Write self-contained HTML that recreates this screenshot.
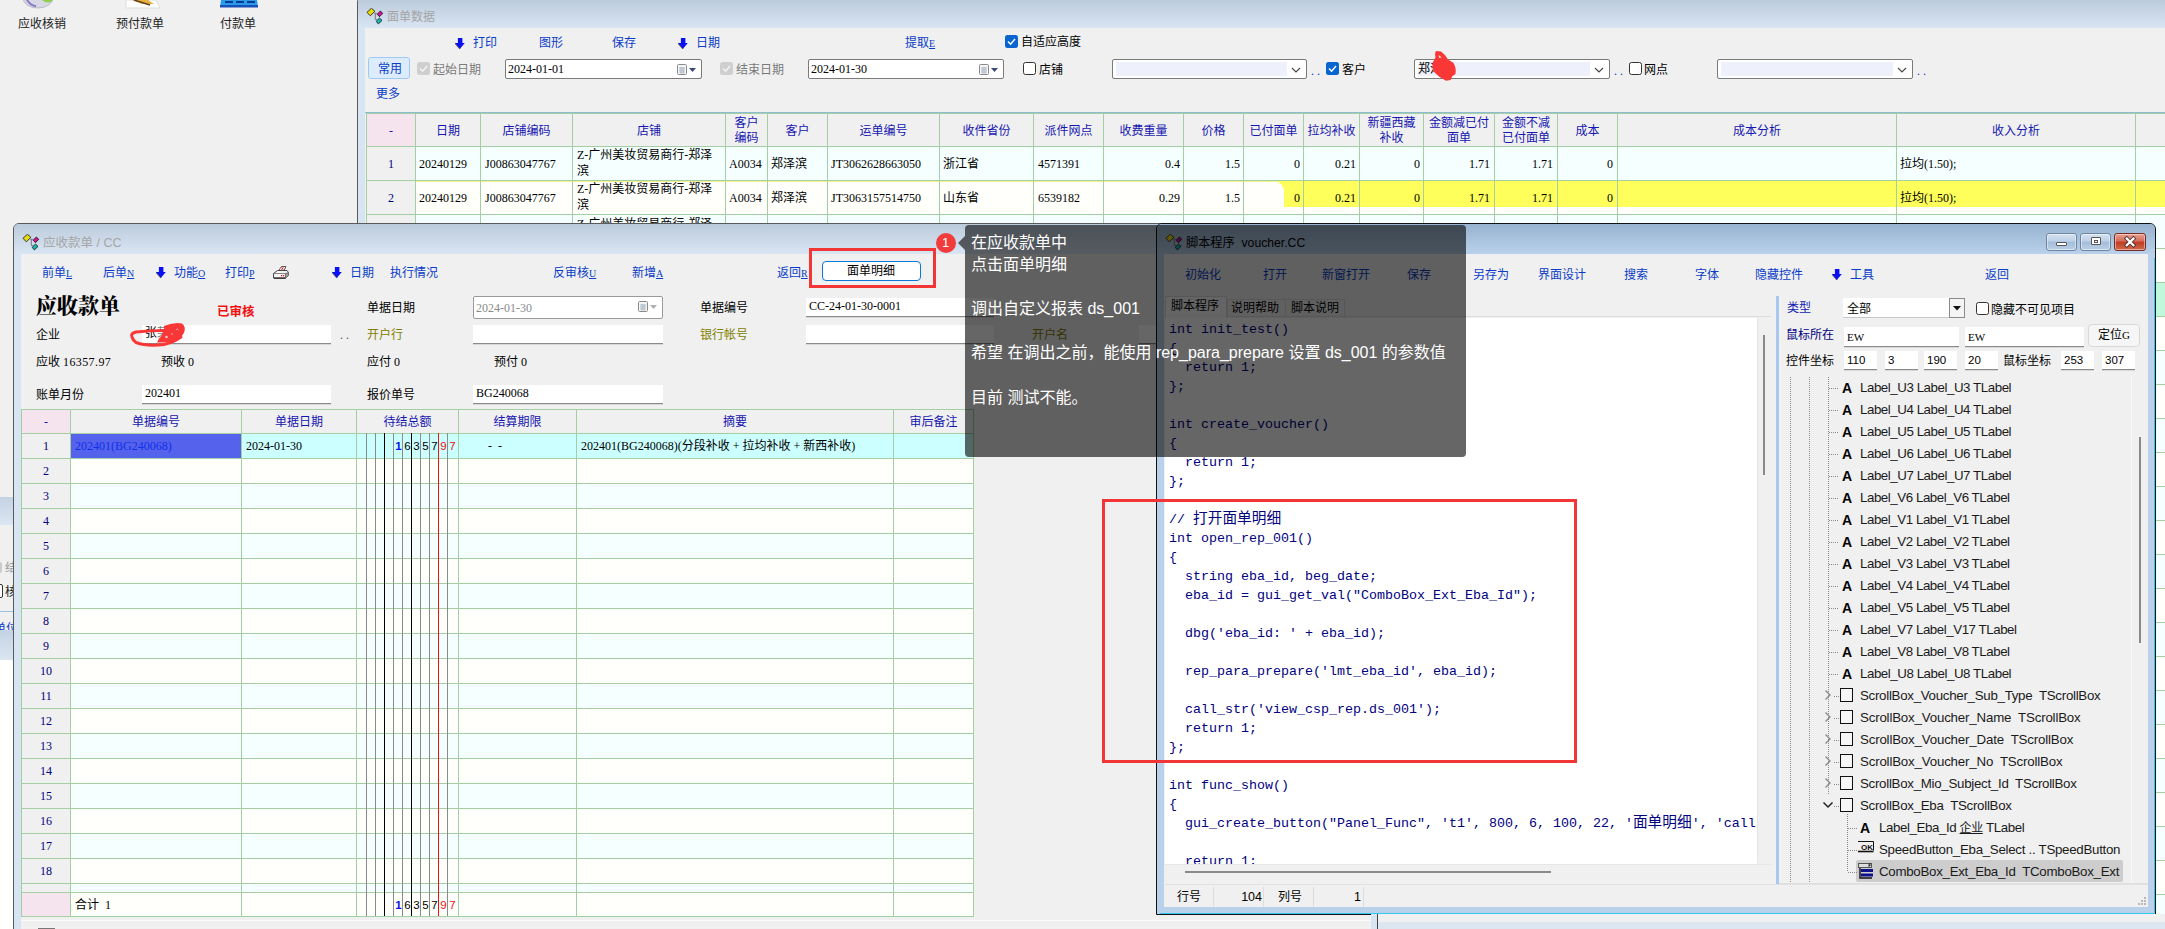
<!DOCTYPE html><html lang="zh"><head><meta charset="utf-8"><title>应收款单</title><style>

html,body{margin:0;padding:0}
body{width:2165px;height:929px;overflow:hidden;position:relative;background:#f0f0f0;font-family:'Liberation Serif','Noto Sans CJK SC',sans-serif;font-size:12px;}
div{box-sizing:border-box}
.abs{position:absolute}
.inp{position:absolute;background:#fff;border-bottom:1px solid #8a8a8a;box-shadow:0 1px 0 #d8d8d8;padding-left:3px;white-space:nowrap;overflow:hidden;font-size:12px}
.date{position:absolute;background:#fff;border:1px solid #7a7a7a;border-radius:2px;padding-left:2px;white-space:nowrap;font-size:12px}
.cb{position:absolute;width:13px;height:13px;border:1px solid #333;border-radius:2.5px;background:#fff}
.cbc{position:absolute;width:13px;height:13px;border-radius:2.5px;background:#0a64d0}
.cbd{position:absolute;width:13px;height:13px;border-radius:2.5px;background:#cfcfcf}
.combo{position:absolute;background:#fff;border:1px solid #7a7a7a;border-radius:2px}
.combo i{position:absolute;left:3px;top:2px;bottom:2px;right:19px;background:#eef0fb}
.vl{position:absolute;width:1px;background:#a3cfa3}
.hl{position:absolute;height:1px;background:#a3cfa3}
.tree{font-family:'Liberation Sans','Noto Sans CJK SC',sans-serif;font-size:13.3px;color:#1a1a1a;letter-spacing:-0.28px}
.code{font-family:'Liberation Mono','Noto Sans CJK SC',monospace;font-size:13.34px;color:#000080;white-space:pre;position:absolute;line-height:19px}
.code b{font-weight:normal;font-size:14.7px;line-height:1}
.k{font-size:10px}
.ov{font-family:'Liberation Sans','Noto Sans CJK SC',sans-serif;font-size:16px;color:#fff}

</style></head><body>
<div style="position:absolute;left:18px;top:16px;line-height:16px;font-size:12px;color:#222;white-space:nowrap;">应收核销</div>
<div style="position:absolute;left:116px;top:16px;line-height:16px;font-size:12px;color:#222;white-space:nowrap;">预付款单</div>
<div style="position:absolute;left:220px;top:16px;line-height:16px;font-size:12px;color:#222;white-space:nowrap;">付款单</div>
<svg class="abs" style="left:20px;top:0" width="40" height="12"><ellipse cx="18" cy="-2" rx="15" ry="10" fill="#d8d8e4" stroke="#b8b8c8"/><path d="M22 0q8 6 12-2v-2h-12z" fill="#8ed04a"/><path d="M6 -2q4 8 10 8" stroke="#8878c8" fill="none" stroke-width="2"/></svg>
<svg class="abs" style="left:124px;top:0" width="40" height="12"><path d="M2 0h30l4 8h-34z" fill="#fff" stroke="#ddd"/><path d="M8 0h16l6 4h-12z" fill="#e8b040"/><path d="M10 0l16 5" stroke="#604020" stroke-width="1.5"/></svg>
<svg class="abs" style="left:219px;top:0" width="42" height="12"><path d="M2 0h36l1 7h-38z" fill="#2a9be8"/><path d="M1 5h38v2.5h-38z" fill="#1850b8"/><path d="M6 2h8M17 2h8M28 2h8" stroke="#0b3a90" stroke-width="2"/></svg>
<div style="position:absolute;left:0px;top:497px;width:14px;height:28px;background:linear-gradient(#c3d2e4,#dce6f2)"></div>
<div style="position:absolute;left:-4px;top:560px;line-height:16px;font-size:12px;color:#999;white-space:nowrap;"><span style="display:inline-block;width:6px;height:11px;border-radius:2px;background:#ccc;vertical-align:-1px;margin-right:3px"></span>结</div>
<div style="position:absolute;left:-7px;top:584px;line-height:16px;font-size:12px;color:#222;white-space:nowrap;"><span style="display:inline-block;width:8px;height:12px;border:1px solid #333;border-radius:2px;background:#fff;vertical-align:-2px;margin-right:2px"></span>核</div>
<div style="position:absolute;left:0px;top:611px;width:14px;height:1px;background:#9cc0e0"></div>
<div style="position:absolute;left:-6px;top:621px;line-height:16px;font-size:12px;color:#0a3cc8;white-space:nowrap;text-decoration:underline;">单位</div>
<div style="position:absolute;left:0px;top:630px;width:14px;height:30px;background:linear-gradient(#c3d2e4,#dce6f2)"></div>
<div style="position:absolute;left:0px;top:660px;width:14px;height:269px;background:#fff"></div>
<div class="abs" style="left:357px;top:-4px;width:1830px;height:940px;border:1px solid #5a5a5a;border-radius:6px 6px 0 0;background:#d7e4f2"></div>
<div style="position:absolute;left:358px;top:0px;width:1810px;height:28px;background:linear-gradient(#bccbdc,#d9e5f3)"></div>
<div style="position:absolute;left:365px;top:28px;width:1800px;height:901px;background:#f0f0f0"></div>
<svg width="18" height="17" viewBox="0 0 18 17" style="position:absolute;left:366px;top:8px"><path d="M8.3 5.3h2.6M9.3 5.3v6.3h2" fill="none" stroke="#777" stroke-width="1"/><path d="M1 4.3L5.4 0.2 8.9 3.3 4.3 7.8z" fill="#e6dc10" stroke="#111" stroke-width=".8"/><path d="M11.2 6.2L14.3 3 16.8 5.3 13.5 8.7z" fill="#d8109c" stroke="#111" stroke-width=".8"/><path d="M10.2 13.4L13.5 10.1 16 12.4 12.4 15.9z" fill="#10bcb4" stroke="#111" stroke-width=".8"/></svg>
<div style="position:absolute;left:387px;top:9px;line-height:16px;font-size:12px;color:#a4a4a4;white-space:nowrap;font-family:'Liberation Sans','Noto Sans CJK SC',sans-serif;">面单数据</div>
<svg width="11" height="13" viewBox="0 0 11 13" style="position:absolute;left:455px;top:36.5px"><path d="M0.2 6.2L5 11.9" fill="none" stroke="#555" stroke-width="1.3"/><path d="M2.9 1h4.5v5h2.4L5 11.7 0.2 6h2.7z" fill="#0a10f4"/></svg>
<div style="position:absolute;left:473px;top:35px;line-height:16px;font-size:12px;color:#0a3cc8;white-space:nowrap;">打印</div>
<div style="position:absolute;left:539px;top:35px;line-height:16px;font-size:12px;color:#0a3cc8;white-space:nowrap;">图形</div>
<div style="position:absolute;left:612px;top:35px;line-height:16px;font-size:12px;color:#0a3cc8;white-space:nowrap;">保存</div>
<svg width="11" height="13" viewBox="0 0 11 13" style="position:absolute;left:677.5px;top:36.5px"><path d="M0.2 6.2L5 11.9" fill="none" stroke="#555" stroke-width="1.3"/><path d="M2.9 1h4.5v5h2.4L5 11.7 0.2 6h2.7z" fill="#0a10f4"/></svg>
<div style="position:absolute;left:696px;top:35px;line-height:16px;font-size:12px;color:#0a3cc8;white-space:nowrap;">日期</div>
<div style="position:absolute;left:905px;top:35px;line-height:16px;font-size:12px;color:#0a3cc8;white-space:nowrap;">提取<u class="k">E</u></div>
<div class="cbc" style="left:1005px;top:35px"><svg width="13" height="13"><path d="M3 6.5l2.6 2.7L10 4" stroke="#fff" stroke-width="1.4" fill="none"/></svg></div>
<div style="position:absolute;left:1021px;top:34px;line-height:16px;font-size:12px;color:#000;white-space:nowrap;">自适应高度</div>
<div style="position:absolute;left:368px;top:57px;width:42px;height:22px;background:#dcecfc;border:1px solid #9ccaf4;border-radius:3px"></div>
<div style="position:absolute;left:378px;top:61px;line-height:16px;font-size:12px;color:#0a3cc8;white-space:nowrap;">常用</div>
<div class="cbd" style="left:417px;top:62px"><svg width="13" height="13"><path d="M3 6.5l2.6 2.7L10 4" stroke="#f4f4f4" stroke-width="1.4" fill="none"/></svg></div>
<div style="position:absolute;left:433px;top:62px;line-height:16px;font-size:12px;color:#7a7a7a;white-space:nowrap;">起始日期</div>
<div class="date" style="left:505px;top:59px;width:197px;height:20px;line-height:18px">2024-01-01<svg width="19" height="12" style="position:absolute;right:5px;top:4px"><rect x=".5" y=".5" width="9" height="10" rx="1" fill="#f4f4f4" stroke="#8a8a8a"/><path d="M2 4h6M2 6h6M2 8h6M4 3v7M6 3v7" stroke="#9ab" stroke-width=".7"/><path d="M12 4h7l-3.5 4z" fill="#3a4a78"/></svg></div>
<div class="cbd" style="left:720px;top:62px"><svg width="13" height="13"><path d="M3 6.5l2.6 2.7L10 4" stroke="#f4f4f4" stroke-width="1.4" fill="none"/></svg></div>
<div style="position:absolute;left:736px;top:62px;line-height:16px;font-size:12px;color:#7a7a7a;white-space:nowrap;">结束日期</div>
<div class="date" style="left:808px;top:59px;width:196px;height:20px;line-height:18px">2024-01-30<svg width="19" height="12" style="position:absolute;right:5px;top:4px"><rect x=".5" y=".5" width="9" height="10" rx="1" fill="#f4f4f4" stroke="#8a8a8a"/><path d="M2 4h6M2 6h6M2 8h6M4 3v7M6 3v7" stroke="#9ab" stroke-width=".7"/><path d="M12 4h7l-3.5 4z" fill="#3a4a78"/></svg></div>
<div class="cb" style="left:1023px;top:62px"></div>
<div style="position:absolute;left:1039px;top:62px;line-height:16px;font-size:12px;color:#000;white-space:nowrap;">店铺</div>
<div class="combo" style="left:1112px;top:59px;width:195px;height:20px"><i></i><svg width="10" height="6" style="position:absolute;right:5px;top:7px"><path d="M1 1l4 4 4-4" stroke="#444" fill="none" stroke-width="1.1"/></svg></div>
<div style="position:absolute;left:1311px;top:62.5px;line-height:16px;font-size:12px;color:#0a3cc8;white-space:nowrap;">. .</div>
<div class="cbc" style="left:1326px;top:62px"><svg width="13" height="13"><path d="M3 6.5l2.6 2.7L10 4" stroke="#fff" stroke-width="1.4" fill="none"/></svg></div>
<div style="position:absolute;left:1342px;top:62px;line-height:16px;font-size:12px;color:#000;white-space:nowrap;">客户</div>
<div class="combo" style="left:1414px;top:59px;width:196px;height:20px"><i></i><svg width="10" height="6" style="position:absolute;right:5px;top:7px"><path d="M1 1l4 4 4-4" stroke="#444" fill="none" stroke-width="1.1"/></svg><span style="position:absolute;left:3px;top:1px;line-height:16px">郑泽滨</span></div>
<div style="position:absolute;left:1614px;top:62.5px;line-height:16px;font-size:12px;color:#0a3cc8;white-space:nowrap;">. .</div>
<div class="cb" style="left:1629px;top:62px"></div>
<div style="position:absolute;left:1644px;top:62px;line-height:16px;font-size:12px;color:#000;white-space:nowrap;">网点</div>
<div class="combo" style="left:1717px;top:59px;width:196px;height:20px"><i></i><svg width="10" height="6" style="position:absolute;right:5px;top:7px"><path d="M1 1l4 4 4-4" stroke="#444" fill="none" stroke-width="1.1"/></svg></div>
<div style="position:absolute;left:1917px;top:62.5px;line-height:16px;font-size:12px;color:#0a3cc8;white-space:nowrap;">. .</div>
<div style="position:absolute;left:376px;top:86px;line-height:16px;font-size:12px;color:#0a3cc8;white-space:nowrap;">更多</div>
<div style="position:absolute;left:365px;top:112px;width:1800px;height:1px;background:#8fbbd0"></div>
<div style="position:absolute;left:367px;top:113px;width:1800px;height:33px;background:#f0f0f0"></div>
<div style="position:absolute;left:367px;top:113px;width:48px;height:33px;background:#f5e3ee"></div>
<div style="position:absolute;left:415px;top:146px;width:1760px;height:34px;background:#f5ffff"></div>
<div style="position:absolute;left:367px;top:146px;width:48px;height:34px;background:#f0f0f0"></div>
<div style="position:absolute;left:415px;top:180px;width:1760px;height:34px;background:#fffffc"></div>
<div style="position:absolute;left:367px;top:180px;width:48px;height:34px;background:#f0f0f0"></div>
<div style="position:absolute;left:415px;top:214px;width:1760px;height:34px;background:#f5ffff"></div>
<div style="position:absolute;left:367px;top:214px;width:48px;height:34px;background:#f0f0f0"></div>
<div style="position:absolute;left:415px;top:248px;width:1760px;height:34px;background:#fffffc"></div>
<div style="position:absolute;left:367px;top:248px;width:48px;height:34px;background:#f0f0f0"></div>
<div style="position:absolute;left:415px;top:282px;width:1760px;height:34px;background:#bff8da"></div>
<div style="position:absolute;left:367px;top:282px;width:48px;height:34px;background:#f0f0f0"></div>
<div style="position:absolute;left:415px;top:316px;width:1760px;height:34px;background:#fffffc"></div>
<div style="position:absolute;left:367px;top:316px;width:48px;height:34px;background:#f0f0f0"></div>
<div style="position:absolute;left:415px;top:350px;width:1760px;height:34px;background:#f5ffff"></div>
<div style="position:absolute;left:367px;top:350px;width:48px;height:34px;background:#f0f0f0"></div>
<div style="position:absolute;left:415px;top:384px;width:1760px;height:34px;background:#fffffc"></div>
<div style="position:absolute;left:367px;top:384px;width:48px;height:34px;background:#f0f0f0"></div>
<div style="position:absolute;left:415px;top:418px;width:1760px;height:34px;background:#f5ffff"></div>
<div style="position:absolute;left:367px;top:418px;width:48px;height:34px;background:#f0f0f0"></div>
<div style="position:absolute;left:415px;top:452px;width:1760px;height:34px;background:#fffffc"></div>
<div style="position:absolute;left:367px;top:452px;width:48px;height:34px;background:#f0f0f0"></div>
<div style="position:absolute;left:415px;top:486px;width:1760px;height:34px;background:#f5ffff"></div>
<div style="position:absolute;left:367px;top:486px;width:48px;height:34px;background:#f0f0f0"></div>
<div style="position:absolute;left:415px;top:520px;width:1760px;height:34px;background:#fffffc"></div>
<div style="position:absolute;left:367px;top:520px;width:48px;height:34px;background:#f0f0f0"></div>
<div style="position:absolute;left:415px;top:554px;width:1760px;height:34px;background:#f5ffff"></div>
<div style="position:absolute;left:367px;top:554px;width:48px;height:34px;background:#f0f0f0"></div>
<div style="position:absolute;left:415px;top:588px;width:1760px;height:34px;background:#fffffc"></div>
<div style="position:absolute;left:367px;top:588px;width:48px;height:34px;background:#f0f0f0"></div>
<div style="position:absolute;left:415px;top:622px;width:1760px;height:34px;background:#f5ffff"></div>
<div style="position:absolute;left:367px;top:622px;width:48px;height:34px;background:#f0f0f0"></div>
<div style="position:absolute;left:415px;top:656px;width:1760px;height:34px;background:#fffffc"></div>
<div style="position:absolute;left:367px;top:656px;width:48px;height:34px;background:#f0f0f0"></div>
<div style="position:absolute;left:415px;top:690px;width:1760px;height:34px;background:#f5ffff"></div>
<div style="position:absolute;left:367px;top:690px;width:48px;height:34px;background:#f0f0f0"></div>
<div style="position:absolute;left:415px;top:724px;width:1760px;height:34px;background:#fffffc"></div>
<div style="position:absolute;left:367px;top:724px;width:48px;height:34px;background:#f0f0f0"></div>
<div style="position:absolute;left:415px;top:758px;width:1760px;height:34px;background:#f5ffff"></div>
<div style="position:absolute;left:367px;top:758px;width:48px;height:34px;background:#f0f0f0"></div>
<div style="position:absolute;left:415px;top:792px;width:1760px;height:34px;background:#fffffc"></div>
<div style="position:absolute;left:367px;top:792px;width:48px;height:34px;background:#f0f0f0"></div>
<div style="position:absolute;left:415px;top:826px;width:1760px;height:34px;background:#f5ffff"></div>
<div style="position:absolute;left:367px;top:826px;width:48px;height:34px;background:#f0f0f0"></div>
<div style="position:absolute;left:415px;top:860px;width:1760px;height:34px;background:#fffffc"></div>
<div style="position:absolute;left:367px;top:860px;width:48px;height:34px;background:#f0f0f0"></div>
<div style="position:absolute;left:415px;top:894px;width:1760px;height:34px;background:#f5ffff"></div>
<div style="position:absolute;left:367px;top:894px;width:48px;height:34px;background:#f0f0f0"></div>
<div style="position:absolute;left:415px;top:928px;width:1760px;height:34px;background:#fffffc"></div>
<div style="position:absolute;left:367px;top:928px;width:48px;height:34px;background:#f0f0f0"></div>
<div class="abs" style="left:1276px;top:181px;width:895px;height:26px;background:#ffff5c;clip-path:polygon(0 0,100% 0,100% 100%,8px 100%,8px 9px,6px 4px)"></div>
<div style="position:absolute;left:415px;top:181px;width:866px;height:1px;background:#f4f48a"></div>
<div style="position:absolute;left:366px;top:113px;width:1800px;height:1px;background:#a3cfa3"></div>
<div style="position:absolute;left:366px;top:146px;width:1800px;height:1px;background:#a3cfa3"></div>
<div style="position:absolute;left:366px;top:180px;width:1800px;height:1px;background:#a3cfa3"></div>
<div style="position:absolute;left:366px;top:214px;width:1800px;height:1px;background:#a3cfa3"></div>
<div style="position:absolute;left:366px;top:248px;width:1800px;height:1px;background:#a3cfa3"></div>
<div style="position:absolute;left:366px;top:282px;width:1800px;height:1px;background:#a3cfa3"></div>
<div style="position:absolute;left:366px;top:316px;width:1800px;height:1px;background:#a3cfa3"></div>
<div style="position:absolute;left:366px;top:350px;width:1800px;height:1px;background:#a3cfa3"></div>
<div style="position:absolute;left:366px;top:384px;width:1800px;height:1px;background:#a3cfa3"></div>
<div style="position:absolute;left:366px;top:418px;width:1800px;height:1px;background:#a3cfa3"></div>
<div style="position:absolute;left:366px;top:452px;width:1800px;height:1px;background:#a3cfa3"></div>
<div style="position:absolute;left:366px;top:486px;width:1800px;height:1px;background:#a3cfa3"></div>
<div style="position:absolute;left:366px;top:520px;width:1800px;height:1px;background:#a3cfa3"></div>
<div style="position:absolute;left:366px;top:554px;width:1800px;height:1px;background:#a3cfa3"></div>
<div style="position:absolute;left:366px;top:588px;width:1800px;height:1px;background:#a3cfa3"></div>
<div style="position:absolute;left:366px;top:622px;width:1800px;height:1px;background:#a3cfa3"></div>
<div style="position:absolute;left:366px;top:656px;width:1800px;height:1px;background:#a3cfa3"></div>
<div style="position:absolute;left:366px;top:690px;width:1800px;height:1px;background:#a3cfa3"></div>
<div style="position:absolute;left:366px;top:724px;width:1800px;height:1px;background:#a3cfa3"></div>
<div style="position:absolute;left:366px;top:758px;width:1800px;height:1px;background:#a3cfa3"></div>
<div style="position:absolute;left:366px;top:792px;width:1800px;height:1px;background:#a3cfa3"></div>
<div style="position:absolute;left:366px;top:826px;width:1800px;height:1px;background:#a3cfa3"></div>
<div style="position:absolute;left:366px;top:860px;width:1800px;height:1px;background:#a3cfa3"></div>
<div style="position:absolute;left:366px;top:894px;width:1800px;height:1px;background:#a3cfa3"></div>
<div style="position:absolute;left:366px;top:928px;width:1800px;height:1px;background:#a3cfa3"></div>
<div style="position:absolute;left:366px;top:962px;width:1800px;height:1px;background:#a3cfa3"></div>
<div style="position:absolute;left:366px;top:113px;width:1px;height:820px;background:#a3cfa3"></div>
<div style="position:absolute;left:415px;top:113px;width:1px;height:820px;background:#a3cfa3"></div>
<div style="position:absolute;left:480px;top:113px;width:1px;height:820px;background:#a3cfa3"></div>
<div style="position:absolute;left:572px;top:113px;width:1px;height:820px;background:#a3cfa3"></div>
<div style="position:absolute;left:725px;top:113px;width:1px;height:820px;background:#a3cfa3"></div>
<div style="position:absolute;left:767px;top:113px;width:1px;height:820px;background:#a3cfa3"></div>
<div style="position:absolute;left:827px;top:113px;width:1px;height:820px;background:#a3cfa3"></div>
<div style="position:absolute;left:939px;top:113px;width:1px;height:820px;background:#a3cfa3"></div>
<div style="position:absolute;left:1033px;top:113px;width:1px;height:820px;background:#a3cfa3"></div>
<div style="position:absolute;left:1103px;top:113px;width:1px;height:820px;background:#a3cfa3"></div>
<div style="position:absolute;left:1183px;top:113px;width:1px;height:820px;background:#a3cfa3"></div>
<div style="position:absolute;left:1243px;top:113px;width:1px;height:820px;background:#a3cfa3"></div>
<div style="position:absolute;left:1303px;top:113px;width:1px;height:820px;background:#a3cfa3"></div>
<div style="position:absolute;left:1359px;top:113px;width:1px;height:820px;background:#a3cfa3"></div>
<div style="position:absolute;left:1423px;top:113px;width:1px;height:820px;background:#a3cfa3"></div>
<div style="position:absolute;left:1494px;top:113px;width:1px;height:820px;background:#a3cfa3"></div>
<div style="position:absolute;left:1557px;top:113px;width:1px;height:820px;background:#a3cfa3"></div>
<div style="position:absolute;left:1617px;top:113px;width:1px;height:820px;background:#a3cfa3"></div>
<div style="position:absolute;left:1896px;top:113px;width:1px;height:820px;background:#a3cfa3"></div>
<div style="position:absolute;left:2135px;top:113px;width:1px;height:820px;background:#a3cfa3"></div>
<div style="position:absolute;left:2189px;top:113px;width:1px;height:820px;background:#a3cfa3"></div>
<div class="abs" style="left:367px;top:123px;width:48px;text-align:center;line-height:16px;color:#1616b0;white-space:nowrap">-</div>
<div class="abs" style="left:416px;top:123px;width:64px;text-align:center;line-height:16px;color:#1616b0;white-space:nowrap">日期</div>
<div class="abs" style="left:481px;top:123px;width:91px;text-align:center;line-height:16px;color:#1616b0;white-space:nowrap">店铺编码</div>
<div class="abs" style="left:573px;top:123px;width:152px;text-align:center;line-height:16px;color:#1616b0;white-space:nowrap">店铺</div>
<div class="abs" style="left:726px;top:116px;width:41px;text-align:center;line-height:14.5px;color:#1616b0;white-space:nowrap">客户<br>编码</div>
<div class="abs" style="left:768px;top:123px;width:59px;text-align:center;line-height:16px;color:#1616b0;white-space:nowrap">客户</div>
<div class="abs" style="left:828px;top:123px;width:111px;text-align:center;line-height:16px;color:#1616b0;white-space:nowrap">运单编号</div>
<div class="abs" style="left:940px;top:123px;width:93px;text-align:center;line-height:16px;color:#1616b0;white-space:nowrap">收件省份</div>
<div class="abs" style="left:1034px;top:123px;width:69px;text-align:center;line-height:16px;color:#1616b0;white-space:nowrap">派件网点</div>
<div class="abs" style="left:1104px;top:123px;width:79px;text-align:center;line-height:16px;color:#1616b0;white-space:nowrap">收费重量</div>
<div class="abs" style="left:1184px;top:123px;width:59px;text-align:center;line-height:16px;color:#1616b0;white-space:nowrap">价格</div>
<div class="abs" style="left:1244px;top:123px;width:59px;text-align:center;line-height:16px;color:#1616b0;white-space:nowrap">已付面单</div>
<div class="abs" style="left:1304px;top:123px;width:55px;text-align:center;line-height:16px;color:#1616b0;white-space:nowrap">拉均补收</div>
<div class="abs" style="left:1360px;top:116px;width:63px;text-align:center;line-height:14.5px;color:#1616b0;white-space:nowrap">新疆西藏<br>补收</div>
<div class="abs" style="left:1424px;top:116px;width:70px;text-align:center;line-height:14.5px;color:#1616b0;white-space:nowrap">金额减已付<br>面单</div>
<div class="abs" style="left:1495px;top:116px;width:62px;text-align:center;line-height:14.5px;color:#1616b0;white-space:nowrap">金额不减<br>已付面单</div>
<div class="abs" style="left:1558px;top:123px;width:59px;text-align:center;line-height:16px;color:#1616b0;white-space:nowrap">成本</div>
<div class="abs" style="left:1618px;top:123px;width:278px;text-align:center;line-height:16px;color:#1616b0;white-space:nowrap">成本分析</div>
<div class="abs" style="left:1897px;top:123px;width:238px;text-align:center;line-height:16px;color:#1616b0;white-space:nowrap">收入分析</div>
<div class="abs" style="left:367px;top:155.5px;width:48px;text-align:center;line-height:16px;color:#000080">1</div>
<div style="position:absolute;left:419px;top:155.5px;line-height:16px;font-size:12px;color:#000;white-space:nowrap;">20240129</div>
<div style="position:absolute;left:485px;top:155.5px;line-height:16px;font-size:12px;color:#000;white-space:nowrap;">J00863047767</div>
<div class="abs" style="left:577px;top:148.1px;line-height:15.5px;white-space:nowrap">Z-广州美妆贸易商行-郑泽<br>滨</div>
<div style="position:absolute;left:729px;top:155.5px;line-height:16px;font-size:12px;color:#000;white-space:nowrap;">A0034</div>
<div style="position:absolute;left:771px;top:155.5px;line-height:16px;font-size:12px;color:#000;white-space:nowrap;">郑泽滨</div>
<div style="position:absolute;left:831px;top:155.5px;line-height:16px;font-size:12px;color:#000;white-space:nowrap;">JT3062628663050</div>
<div style="position:absolute;left:943px;top:155.5px;line-height:16px;font-size:12px;color:#000;white-space:nowrap;">浙江省</div>
<div style="position:absolute;left:1038px;top:155.5px;line-height:16px;font-size:12px;color:#000;white-space:nowrap;">4571391</div>
<div style="position:absolute;left:780px;width:400px;text-align:right;top:155.5px;line-height:16px;font-size:12px;color:#000;white-space:nowrap;">0.4</div>
<div style="position:absolute;left:840px;width:400px;text-align:right;top:155.5px;line-height:16px;font-size:12px;color:#000;white-space:nowrap;">1.5</div>
<div style="position:absolute;left:900px;width:400px;text-align:right;top:155.5px;line-height:16px;font-size:12px;color:#000;white-space:nowrap;">0</div>
<div style="position:absolute;left:956px;width:400px;text-align:right;top:155.5px;line-height:16px;font-size:12px;color:#000;white-space:nowrap;">0.21</div>
<div style="position:absolute;left:1020px;width:400px;text-align:right;top:155.5px;line-height:16px;font-size:12px;color:#000;white-space:nowrap;">0</div>
<div style="position:absolute;left:1090px;width:400px;text-align:right;top:155.5px;line-height:16px;font-size:12px;color:#000;white-space:nowrap;">1.71</div>
<div style="position:absolute;left:1153px;width:400px;text-align:right;top:155.5px;line-height:16px;font-size:12px;color:#000;white-space:nowrap;">1.71</div>
<div style="position:absolute;left:1213px;width:400px;text-align:right;top:155.5px;line-height:16px;font-size:12px;color:#000;white-space:nowrap;">0</div>
<div style="position:absolute;left:1900px;top:155.5px;line-height:16px;font-size:12px;color:#000;white-space:nowrap;">拉均(1.50);</div>
<div class="abs" style="left:367px;top:189.5px;width:48px;text-align:center;line-height:16px;color:#000080">2</div>
<div style="position:absolute;left:419px;top:189.5px;line-height:16px;font-size:12px;color:#000;white-space:nowrap;">20240129</div>
<div style="position:absolute;left:485px;top:189.5px;line-height:16px;font-size:12px;color:#000;white-space:nowrap;">J00863047767</div>
<div class="abs" style="left:577px;top:182.1px;line-height:15.5px;white-space:nowrap">Z-广州美妆贸易商行-郑泽<br>滨</div>
<div style="position:absolute;left:729px;top:189.5px;line-height:16px;font-size:12px;color:#000;white-space:nowrap;">A0034</div>
<div style="position:absolute;left:771px;top:189.5px;line-height:16px;font-size:12px;color:#000;white-space:nowrap;">郑泽滨</div>
<div style="position:absolute;left:831px;top:189.5px;line-height:16px;font-size:12px;color:#000;white-space:nowrap;">JT3063157514750</div>
<div style="position:absolute;left:943px;top:189.5px;line-height:16px;font-size:12px;color:#000;white-space:nowrap;">山东省</div>
<div style="position:absolute;left:1038px;top:189.5px;line-height:16px;font-size:12px;color:#000;white-space:nowrap;">6539182</div>
<div style="position:absolute;left:780px;width:400px;text-align:right;top:189.5px;line-height:16px;font-size:12px;color:#000;white-space:nowrap;">0.29</div>
<div style="position:absolute;left:840px;width:400px;text-align:right;top:189.5px;line-height:16px;font-size:12px;color:#000;white-space:nowrap;">1.5</div>
<div style="position:absolute;left:900px;width:400px;text-align:right;top:189.5px;line-height:16px;font-size:12px;color:#000;white-space:nowrap;">0</div>
<div style="position:absolute;left:956px;width:400px;text-align:right;top:189.5px;line-height:16px;font-size:12px;color:#000;white-space:nowrap;">0.21</div>
<div style="position:absolute;left:1020px;width:400px;text-align:right;top:189.5px;line-height:16px;font-size:12px;color:#000;white-space:nowrap;">0</div>
<div style="position:absolute;left:1090px;width:400px;text-align:right;top:189.5px;line-height:16px;font-size:12px;color:#000;white-space:nowrap;">1.71</div>
<div style="position:absolute;left:1153px;width:400px;text-align:right;top:189.5px;line-height:16px;font-size:12px;color:#000;white-space:nowrap;">1.71</div>
<div style="position:absolute;left:1213px;width:400px;text-align:right;top:189.5px;line-height:16px;font-size:12px;color:#000;white-space:nowrap;">0</div>
<div style="position:absolute;left:1900px;top:189.5px;line-height:16px;font-size:12px;color:#000;white-space:nowrap;">拉均(1.50);</div>
<div class="abs" style="left:577px;top:216.6px;line-height:15.5px;white-space:nowrap">Z-广州美妆贸易商行-郑泽</div>
<div class="abs" style="left:13px;top:223px;width:1365px;height:720px;border:1px solid #5a5a5a;border-radius:6px 6px 0 0;background:#d7e4f2;overflow:hidden"><div style="height:30px;background:linear-gradient(#bccbdc,#d9e5f3)"></div></div>
<div style="position:absolute;left:21px;top:254px;width:1350px;height:680px;background:#f0f0f0"></div>
<div style="position:absolute;left:21px;top:920px;width:1350px;height:1px;background:#fcfcfc"></div>
<div style="position:absolute;left:38px;top:928px;width:17px;height:1px;background:#777"></div>
<svg width="18" height="17" viewBox="0 0 18 17" style="position:absolute;left:22px;top:234px"><path d="M8.3 5.3h2.6M9.3 5.3v6.3h2" fill="none" stroke="#777" stroke-width="1"/><path d="M1 4.3L5.4 0.2 8.9 3.3 4.3 7.8z" fill="#e6dc10" stroke="#111" stroke-width=".8"/><path d="M11.2 6.2L14.3 3 16.8 5.3 13.5 8.7z" fill="#d8109c" stroke="#111" stroke-width=".8"/><path d="M10.2 13.4L13.5 10.1 16 12.4 12.4 15.9z" fill="#10bcb4" stroke="#111" stroke-width=".8"/></svg>
<div style="position:absolute;left:43px;top:235px;line-height:16px;font-size:12px;color:#a6a6a6;white-space:nowrap;font-family:'Liberation Sans','Noto Sans CJK SC',sans-serif;font-size:12.5px;">应收款单 / CC</div>
<div style="position:absolute;left:42px;top:265px;line-height:16px;font-size:12px;color:#0a3cc8;white-space:nowrap;">前单<u class="k">L</u></div>
<div style="position:absolute;left:103px;top:265px;line-height:16px;font-size:12px;color:#0a3cc8;white-space:nowrap;">后单<u class="k">N</u></div>
<svg width="11" height="13" viewBox="0 0 11 13" style="position:absolute;left:156px;top:266px"><path d="M0.2 6.2L5 11.9" fill="none" stroke="#555" stroke-width="1.3"/><path d="M2.9 1h4.5v5h2.4L5 11.7 0.2 6h2.7z" fill="#0a10f4"/></svg>
<div style="position:absolute;left:174px;top:265px;line-height:16px;font-size:12px;color:#0a3cc8;white-space:nowrap;">功能<u class="k">O</u></div>
<div style="position:absolute;left:225px;top:265px;line-height:16px;font-size:12px;color:#0a3cc8;white-space:nowrap;">打印<u class="k">P</u></div>
<svg class="abs" style="left:272px;top:265px" width="18" height="14" viewBox="0 0 18 14"><path d="M6 6.5L9.5 1.5h4.5L11.5 6.5z" fill="#fff" stroke="#333" stroke-width=".8"/><path d="M8.6 5.2l3.2-3.2M9.6 2.2l1.8 2.8" stroke="#e01010" stroke-width=".8"/><path d="M1.5 8.5L5.5 5.5h9.5l1.5 2v3l-3 2.5h-12z" fill="#f4f4f4" stroke="#333" stroke-width=".9"/><path d="M13.5 8.5l3-1v3l-3 2.5z" fill="#9a9a9a"/><path d="M1.5 8.5h12l3-1M13.5 8.5v4.5" stroke="#555" stroke-width=".7" fill="none"/><path d="M9 10.6h1.2M11 10.6h1.2" stroke="#e01010" stroke-width="1.1"/><path d="M2 13.2h11.5" stroke="#222" stroke-width="1.2"/></svg>
<svg width="11" height="13" viewBox="0 0 11 13" style="position:absolute;left:332px;top:266px"><path d="M0.2 6.2L5 11.9" fill="none" stroke="#555" stroke-width="1.3"/><path d="M2.9 1h4.5v5h2.4L5 11.7 0.2 6h2.7z" fill="#0a10f4"/></svg>
<div style="position:absolute;left:350px;top:265px;line-height:16px;font-size:12px;color:#0a3cc8;white-space:nowrap;">日期</div>
<div style="position:absolute;left:390px;top:265px;line-height:16px;font-size:12px;color:#0a3cc8;white-space:nowrap;">执行情况</div>
<div style="position:absolute;left:553px;top:265px;line-height:16px;font-size:12px;color:#0a3cc8;white-space:nowrap;">反审核<u class="k">U</u></div>
<div style="position:absolute;left:632px;top:265px;line-height:16px;font-size:12px;color:#0a3cc8;white-space:nowrap;">新增<u class="k">A</u></div>
<div style="position:absolute;left:777px;top:265px;line-height:16px;font-size:12px;color:#0a3cc8;white-space:nowrap;">返回<u class="k">R</u></div>
<div style="position:absolute;left:821.5px;top:260.7px;width:99px;height:20.3px;background:#fff;border:1px solid #0a78d8;border-radius:4px;text-align:center;line-height:19px;font-size:12px">面单明细</div>
<div style="position:absolute;left:36px;top:293px;line-height:26px;font-size:21px;color:#000;white-space:nowrap;font-family:'Liberation Serif','Noto Serif CJK SC',serif;font-weight:900;">应收款单</div>
<div style="position:absolute;left:217px;top:304px;line-height:16px;font-size:12.5px;color:#f01010;white-space:nowrap;font-weight:bold;">已审核</div>
<div style="position:absolute;left:367px;top:300px;line-height:16px;font-size:12px;color:#000;white-space:nowrap;">单据日期</div>
<div class="date" style="left:473px;top:296px;width:190px;height:23px;line-height:22px;color:#8a8a8a;border-color:#9a9a9a">2024-01-30<svg width="19" height="12" style="position:absolute;right:5px;top:4px"><rect x=".5" y=".5" width="9" height="10" rx="1" fill="#f4f4f4" stroke="#8a8a8a"/><path d="M2 4h6M2 6h6M2 8h6M4 3v7M6 3v7" stroke="#9ab" stroke-width=".7"/><path d="M12 4h7l-3.5 4z" fill="#b0b0b0"/></svg></div>
<div style="position:absolute;left:700px;top:300px;line-height:16px;font-size:12px;color:#000;white-space:nowrap;">单据编号</div>
<div class="inp" style="left:806px;top:298px;width:188px;height:19px;line-height:17px">CC-24-01-30-0001</div>
<div style="position:absolute;left:36px;top:327px;line-height:16px;font-size:12px;color:#000;white-space:nowrap;">企业</div>
<div class="inp" style="left:142px;top:325px;width:189px;height:19px;line-height:17px">张<span style="color:#777">某</span></div>
<div style="position:absolute;left:340px;top:327px;line-height:16px;font-size:12px;color:#555;white-space:nowrap;">. .</div>
<div style="position:absolute;left:367px;top:327px;line-height:16px;font-size:12px;color:#808000;white-space:nowrap;">开户行</div>
<div class="inp" style="left:473px;top:325px;width:190px;height:19px"></div>
<div style="position:absolute;left:700px;top:327px;line-height:16px;font-size:12px;color:#808000;white-space:nowrap;">银行帐号</div>
<div class="inp" style="left:806px;top:325px;width:188px;height:19px"></div>
<div style="position:absolute;left:1032px;top:327px;line-height:16px;font-size:12px;color:#808000;white-space:nowrap;">开户名</div>
<div class="inp" style="left:1139px;top:325px;width:188px;height:19px"></div>
<div style="position:absolute;left:36px;top:353.5px;line-height:16px;font-size:12px;color:#000;white-space:nowrap;">应收&nbsp;<span style="letter-spacing:.4px">16357.97</span></div>
<div style="position:absolute;left:161px;top:353.5px;line-height:16px;font-size:12px;color:#000;white-space:nowrap;">预收&nbsp;0</div>
<div style="position:absolute;left:367px;top:353.5px;line-height:16px;font-size:12px;color:#000;white-space:nowrap;">应付&nbsp;0</div>
<div style="position:absolute;left:494px;top:353.5px;line-height:16px;font-size:12px;color:#000;white-space:nowrap;">预付&nbsp;0</div>
<div style="position:absolute;left:36px;top:387px;line-height:16px;font-size:12px;color:#000;white-space:nowrap;">账单月份</div>
<div class="inp" style="left:142px;top:385px;width:189px;height:19px;line-height:17px">202401</div>
<div style="position:absolute;left:367px;top:387px;line-height:16px;font-size:12px;color:#000;white-space:nowrap;">报价单号</div>
<div class="inp" style="left:473px;top:385px;width:190px;height:19px;line-height:17px">BG240068</div>
<div style="position:absolute;left:22px;top:409px;width:952px;height:24px;background:#f0f0f0"></div>
<div style="position:absolute;left:22px;top:409px;width:49px;height:24px;background:#f5e3ee"></div>
<div style="position:absolute;left:71px;top:433px;width:903px;height:25px;background:#ccffff"></div>
<div style="position:absolute;left:22px;top:433px;width:49px;height:25px;background:#f0f0f0"></div>
<div style="position:absolute;left:71px;top:458px;width:903px;height:25px;background:#fffffc"></div>
<div style="position:absolute;left:22px;top:458px;width:49px;height:25px;background:#f0f0f0"></div>
<div style="position:absolute;left:71px;top:483px;width:903px;height:25px;background:#f5ffff"></div>
<div style="position:absolute;left:22px;top:483px;width:49px;height:25px;background:#f0f0f0"></div>
<div style="position:absolute;left:71px;top:508px;width:903px;height:25px;background:#fffffc"></div>
<div style="position:absolute;left:22px;top:508px;width:49px;height:25px;background:#f0f0f0"></div>
<div style="position:absolute;left:71px;top:533px;width:903px;height:25px;background:#f5ffff"></div>
<div style="position:absolute;left:22px;top:533px;width:49px;height:25px;background:#f0f0f0"></div>
<div style="position:absolute;left:71px;top:558px;width:903px;height:25px;background:#fffffc"></div>
<div style="position:absolute;left:22px;top:558px;width:49px;height:25px;background:#f0f0f0"></div>
<div style="position:absolute;left:71px;top:583px;width:903px;height:25px;background:#f5ffff"></div>
<div style="position:absolute;left:22px;top:583px;width:49px;height:25px;background:#f0f0f0"></div>
<div style="position:absolute;left:71px;top:608px;width:903px;height:25px;background:#fffffc"></div>
<div style="position:absolute;left:22px;top:608px;width:49px;height:25px;background:#f0f0f0"></div>
<div style="position:absolute;left:71px;top:633px;width:903px;height:25px;background:#f5ffff"></div>
<div style="position:absolute;left:22px;top:633px;width:49px;height:25px;background:#f0f0f0"></div>
<div style="position:absolute;left:71px;top:658px;width:903px;height:25px;background:#fffffc"></div>
<div style="position:absolute;left:22px;top:658px;width:49px;height:25px;background:#f0f0f0"></div>
<div style="position:absolute;left:71px;top:683px;width:903px;height:25px;background:#f5ffff"></div>
<div style="position:absolute;left:22px;top:683px;width:49px;height:25px;background:#f0f0f0"></div>
<div style="position:absolute;left:71px;top:708px;width:903px;height:25px;background:#fffffc"></div>
<div style="position:absolute;left:22px;top:708px;width:49px;height:25px;background:#f0f0f0"></div>
<div style="position:absolute;left:71px;top:733px;width:903px;height:25px;background:#f5ffff"></div>
<div style="position:absolute;left:22px;top:733px;width:49px;height:25px;background:#f0f0f0"></div>
<div style="position:absolute;left:71px;top:758px;width:903px;height:25px;background:#fffffc"></div>
<div style="position:absolute;left:22px;top:758px;width:49px;height:25px;background:#f0f0f0"></div>
<div style="position:absolute;left:71px;top:783px;width:903px;height:25px;background:#f5ffff"></div>
<div style="position:absolute;left:22px;top:783px;width:49px;height:25px;background:#f0f0f0"></div>
<div style="position:absolute;left:71px;top:808px;width:903px;height:25px;background:#fffffc"></div>
<div style="position:absolute;left:22px;top:808px;width:49px;height:25px;background:#f0f0f0"></div>
<div style="position:absolute;left:71px;top:833px;width:903px;height:25px;background:#f5ffff"></div>
<div style="position:absolute;left:22px;top:833px;width:49px;height:25px;background:#f0f0f0"></div>
<div style="position:absolute;left:71px;top:858px;width:903px;height:25px;background:#fffffc"></div>
<div style="position:absolute;left:22px;top:858px;width:49px;height:25px;background:#f0f0f0"></div>
<div style="position:absolute;left:71px;top:883px;width:903px;height:9px;background:#f5ffff"></div>
<div style="position:absolute;left:22px;top:883px;width:49px;height:9px;background:#f0f0f0"></div>
<div style="position:absolute;left:71px;top:892px;width:903px;height:24px;background:#fffffc"></div>
<div style="position:absolute;left:22px;top:892px;width:49px;height:24px;background:#f5e3ee"></div>
<div style="position:absolute;left:71px;top:434px;width:171px;height:24px;background:#5563ec"></div>
<div style="position:absolute;left:21px;top:409px;width:953px;height:1px;background:#a3cfa3"></div>
<div style="position:absolute;left:21px;top:433px;width:953px;height:1px;background:#a3cfa3"></div>
<div style="position:absolute;left:21px;top:458px;width:953px;height:1px;background:#a3cfa3"></div>
<div style="position:absolute;left:21px;top:483px;width:953px;height:1px;background:#a3cfa3"></div>
<div style="position:absolute;left:21px;top:508px;width:953px;height:1px;background:#a3cfa3"></div>
<div style="position:absolute;left:21px;top:533px;width:953px;height:1px;background:#a3cfa3"></div>
<div style="position:absolute;left:21px;top:558px;width:953px;height:1px;background:#a3cfa3"></div>
<div style="position:absolute;left:21px;top:583px;width:953px;height:1px;background:#a3cfa3"></div>
<div style="position:absolute;left:21px;top:608px;width:953px;height:1px;background:#a3cfa3"></div>
<div style="position:absolute;left:21px;top:633px;width:953px;height:1px;background:#a3cfa3"></div>
<div style="position:absolute;left:21px;top:658px;width:953px;height:1px;background:#a3cfa3"></div>
<div style="position:absolute;left:21px;top:683px;width:953px;height:1px;background:#a3cfa3"></div>
<div style="position:absolute;left:21px;top:708px;width:953px;height:1px;background:#a3cfa3"></div>
<div style="position:absolute;left:21px;top:733px;width:953px;height:1px;background:#a3cfa3"></div>
<div style="position:absolute;left:21px;top:758px;width:953px;height:1px;background:#a3cfa3"></div>
<div style="position:absolute;left:21px;top:783px;width:953px;height:1px;background:#a3cfa3"></div>
<div style="position:absolute;left:21px;top:808px;width:953px;height:1px;background:#a3cfa3"></div>
<div style="position:absolute;left:21px;top:833px;width:953px;height:1px;background:#a3cfa3"></div>
<div style="position:absolute;left:21px;top:858px;width:953px;height:1px;background:#a3cfa3"></div>
<div style="position:absolute;left:21px;top:883px;width:953px;height:1px;background:#a3cfa3"></div>
<div style="position:absolute;left:21px;top:892px;width:953px;height:1px;background:#a3cfa3"></div>
<div style="position:absolute;left:21px;top:916px;width:953px;height:1px;background:#a3cfa3"></div>
<div style="position:absolute;left:21px;top:409px;width:1px;height:508px;background:#a3cfa3"></div>
<div style="position:absolute;left:70px;top:409px;width:1px;height:508px;background:#a3cfa3"></div>
<div style="position:absolute;left:241px;top:409px;width:1px;height:508px;background:#a3cfa3"></div>
<div style="position:absolute;left:356px;top:409px;width:1px;height:508px;background:#a3cfa3"></div>
<div style="position:absolute;left:458px;top:409px;width:1px;height:508px;background:#a3cfa3"></div>
<div style="position:absolute;left:576px;top:409px;width:1px;height:508px;background:#a3cfa3"></div>
<div style="position:absolute;left:893px;top:409px;width:1px;height:508px;background:#a3cfa3"></div>
<div style="position:absolute;left:973px;top:409px;width:1px;height:508px;background:#a3cfa3"></div>
<div style="position:absolute;left:366px;top:433px;width:1px;height:483px;background:#8a8a8a"></div>
<div style="position:absolute;left:375px;top:433px;width:1px;height:483px;background:#8a8a8a"></div>
<div style="position:absolute;left:384px;top:433px;width:1px;height:483px;background:#000"></div>
<div style="position:absolute;left:393px;top:433px;width:1px;height:483px;background:#8a8a8a"></div>
<div style="position:absolute;left:402px;top:433px;width:1px;height:483px;background:#8a8a8a"></div>
<div style="position:absolute;left:411px;top:433px;width:1px;height:483px;background:#000"></div>
<div style="position:absolute;left:420px;top:433px;width:1px;height:483px;background:#8a8a8a"></div>
<div style="position:absolute;left:429px;top:433px;width:1px;height:483px;background:#8a8a8a"></div>
<div style="position:absolute;left:438px;top:433px;width:1px;height:483px;background:#f01010"></div>
<div style="position:absolute;left:447px;top:433px;width:1px;height:483px;background:#8a8a8a"></div>
<div class="abs" style="left:22px;top:414px;width:48px;text-align:center;line-height:16px;color:#1616b0">-</div>
<div class="abs" style="left:71px;top:414px;width:170px;text-align:center;line-height:16px;color:#1616b0">单据编号</div>
<div class="abs" style="left:242px;top:414px;width:114px;text-align:center;line-height:16px;color:#1616b0">单据日期</div>
<div class="abs" style="left:357px;top:414px;width:101px;text-align:center;line-height:16px;color:#1616b0">待结总额</div>
<div class="abs" style="left:459px;top:414px;width:117px;text-align:center;line-height:16px;color:#1616b0">结算期限</div>
<div class="abs" style="left:577px;top:414px;width:316px;text-align:center;line-height:16px;color:#1616b0">摘要</div>
<div class="abs" style="left:894px;top:414px;width:79px;text-align:center;line-height:16px;color:#1616b0">审后备注</div>
<div class="abs" style="left:22px;top:438px;width:48px;text-align:center;line-height:16px;color:#000080">1</div>
<div class="abs" style="left:22px;top:463px;width:48px;text-align:center;line-height:16px;color:#000080">2</div>
<div class="abs" style="left:22px;top:488px;width:48px;text-align:center;line-height:16px;color:#000080">3</div>
<div class="abs" style="left:22px;top:513px;width:48px;text-align:center;line-height:16px;color:#000080">4</div>
<div class="abs" style="left:22px;top:538px;width:48px;text-align:center;line-height:16px;color:#000080">5</div>
<div class="abs" style="left:22px;top:563px;width:48px;text-align:center;line-height:16px;color:#000080">6</div>
<div class="abs" style="left:22px;top:588px;width:48px;text-align:center;line-height:16px;color:#000080">7</div>
<div class="abs" style="left:22px;top:613px;width:48px;text-align:center;line-height:16px;color:#000080">8</div>
<div class="abs" style="left:22px;top:638px;width:48px;text-align:center;line-height:16px;color:#000080">9</div>
<div class="abs" style="left:22px;top:663px;width:48px;text-align:center;line-height:16px;color:#000080">10</div>
<div class="abs" style="left:22px;top:688px;width:48px;text-align:center;line-height:16px;color:#000080">11</div>
<div class="abs" style="left:22px;top:713px;width:48px;text-align:center;line-height:16px;color:#000080">12</div>
<div class="abs" style="left:22px;top:738px;width:48px;text-align:center;line-height:16px;color:#000080">13</div>
<div class="abs" style="left:22px;top:763px;width:48px;text-align:center;line-height:16px;color:#000080">14</div>
<div class="abs" style="left:22px;top:788px;width:48px;text-align:center;line-height:16px;color:#000080">15</div>
<div class="abs" style="left:22px;top:813px;width:48px;text-align:center;line-height:16px;color:#000080">16</div>
<div class="abs" style="left:22px;top:838px;width:48px;text-align:center;line-height:16px;color:#000080">17</div>
<div class="abs" style="left:22px;top:863px;width:48px;text-align:center;line-height:16px;color:#000080">18</div>
<div style="position:absolute;left:75px;top:438px;line-height:16px;font-size:12px;color:#1030e8;white-space:nowrap;">202401(BG240068)</div>
<div style="position:absolute;left:246px;top:438px;line-height:16px;font-size:12px;color:#000;white-space:nowrap;">2024-01-30</div>
<div style="position:absolute;left:488px;top:438px;line-height:16px;font-size:12px;color:#000;white-space:nowrap;">-&nbsp;&nbsp;-</div>
<div style="position:absolute;left:581px;top:438px;line-height:16px;font-size:12px;color:#000;white-space:nowrap;">202401(BG240068)(分段补收 + 拉均补收 + 新西补收)</div>
<div class="abs" style="left:394px;top:438px;width:9px;text-align:center;line-height:16px;color:#1010e8;font-size:11.5px;font-weight:bold;font-family:'Liberation Sans','Noto Sans CJK SC',sans-serif">1</div>
<div class="abs" style="left:403px;top:438px;width:9px;text-align:center;line-height:16px;color:#000;font-size:11.5px;font-family:'Liberation Sans','Noto Sans CJK SC',sans-serif">6</div>
<div class="abs" style="left:412px;top:438px;width:9px;text-align:center;line-height:16px;color:#000;font-size:11.5px;font-family:'Liberation Sans','Noto Sans CJK SC',sans-serif">3</div>
<div class="abs" style="left:421px;top:438px;width:9px;text-align:center;line-height:16px;color:#000;font-size:11.5px;font-family:'Liberation Sans','Noto Sans CJK SC',sans-serif">5</div>
<div class="abs" style="left:430px;top:438px;width:9px;text-align:center;line-height:16px;color:#000;font-size:11.5px;font-family:'Liberation Sans','Noto Sans CJK SC',sans-serif">7</div>
<div class="abs" style="left:439px;top:438px;width:9px;text-align:center;line-height:16px;color:#f01010;font-size:11.5px;font-family:'Liberation Sans','Noto Sans CJK SC',sans-serif">9</div>
<div class="abs" style="left:448px;top:438px;width:9px;text-align:center;line-height:16px;color:#f01010;font-size:11.5px;font-family:'Liberation Sans','Noto Sans CJK SC',sans-serif">7</div>
<div class="abs" style="left:394px;top:896.5px;width:9px;text-align:center;line-height:16px;color:#1010e8;font-size:11.5px;font-weight:bold;font-family:'Liberation Sans','Noto Sans CJK SC',sans-serif">1</div>
<div class="abs" style="left:403px;top:896.5px;width:9px;text-align:center;line-height:16px;color:#000;font-size:11.5px;font-family:'Liberation Sans','Noto Sans CJK SC',sans-serif">6</div>
<div class="abs" style="left:412px;top:896.5px;width:9px;text-align:center;line-height:16px;color:#000;font-size:11.5px;font-family:'Liberation Sans','Noto Sans CJK SC',sans-serif">3</div>
<div class="abs" style="left:421px;top:896.5px;width:9px;text-align:center;line-height:16px;color:#000;font-size:11.5px;font-family:'Liberation Sans','Noto Sans CJK SC',sans-serif">5</div>
<div class="abs" style="left:430px;top:896.5px;width:9px;text-align:center;line-height:16px;color:#000;font-size:11.5px;font-family:'Liberation Sans','Noto Sans CJK SC',sans-serif">7</div>
<div class="abs" style="left:439px;top:896.5px;width:9px;text-align:center;line-height:16px;color:#f01010;font-size:11.5px;font-family:'Liberation Sans','Noto Sans CJK SC',sans-serif">9</div>
<div class="abs" style="left:448px;top:896.5px;width:9px;text-align:center;line-height:16px;color:#f01010;font-size:11.5px;font-family:'Liberation Sans','Noto Sans CJK SC',sans-serif">7</div>
<div style="position:absolute;left:75px;top:897px;line-height:16px;font-size:12px;color:#000;white-space:nowrap;">合计&nbsp;&nbsp;1</div>
<div class="abs" style="left:1156px;top:223px;width:1000px;height:692px;border:1px solid #111;border-radius:6px 6px 0 0;background:#b9d1ea;overflow:hidden"><div style="height:30px;background:linear-gradient(#98b3d0,#b9d1ea)"></div></div>
<div style="position:absolute;left:1164px;top:254px;width:984px;height:653px;background:#f0f0f0"></div>
<div style="position:absolute;left:2154px;top:258px;width:1px;height:655px;background:#35c8ee"></div>
<div style="position:absolute;left:1160px;top:913px;width:995px;height:1px;background:#35c8ee"></div>
<svg width="18" height="17" viewBox="0 0 18 17" style="position:absolute;left:1165px;top:234px"><path d="M8.3 5.3h2.6M9.3 5.3v6.3h2" fill="none" stroke="#777" stroke-width="1"/><path d="M1 4.3L5.4 0.2 8.9 3.3 4.3 7.8z" fill="#e6dc10" stroke="#111" stroke-width=".8"/><path d="M11.2 6.2L14.3 3 16.8 5.3 13.5 8.7z" fill="#d8109c" stroke="#111" stroke-width=".8"/><path d="M10.2 13.4L13.5 10.1 16 12.4 12.4 15.9z" fill="#10bcb4" stroke="#111" stroke-width=".8"/></svg>
<div style="position:absolute;left:1186px;top:235px;line-height:16px;font-size:12px;color:#000;white-space:nowrap;font-family:'Liberation Sans','Noto Sans CJK SC',sans-serif;font-size:12.2px;">脚本程序&nbsp;&nbsp;voucher.CC</div>
<div class="abs" style="left:2046px;top:233px;width:31px;height:18px;border:1px solid #6f86a2;border-radius:3px;background:linear-gradient(#d5e2f0 0%,#bdd0e6 45%,#a3bcd8 50%,#bcd0e6 100%);box-shadow:inset 0 0 0 1px rgba(255,255,255,.45)"><div style="position:absolute;left:9px;top:8px;width:11px;height:4px;background:#fff;border:1px solid #555;border-radius:1px"></div></div>
<div class="abs" style="left:2080px;top:233px;width:31px;height:18px;border:1px solid #6f86a2;border-radius:3px;background:linear-gradient(#d5e2f0 0%,#bdd0e6 45%,#a3bcd8 50%,#bcd0e6 100%);box-shadow:inset 0 0 0 1px rgba(255,255,255,.45)"><div style="position:absolute;left:10px;top:3px;width:10px;height:8px;background:#fff;border:1px solid #555;border-radius:1px"><div style="margin:1.5px auto 0;width:4px;height:3px;border:1px solid #555"></div></div></div>
<div class="abs" style="left:2114px;top:233px;width:32px;height:18px;border:1px solid #7a2a22;border-radius:3px;background:linear-gradient(#e8a090 0%,#d46a58 45%,#c03a22 50%,#d06a4a 100%);box-shadow:inset 0 0 0 1px rgba(255,255,255,.45)"><svg width="30" height="16" style="position:absolute;left:0;top:0"><path d="M11.8 4.6l6.6 6.6M18.4 4.6l-6.6 6.6" stroke="#4a3030" stroke-width="4" stroke-linecap="square"/><path d="M11.8 4.6l6.6 6.6M18.4 4.6l-6.6 6.6" stroke="#fff" stroke-width="2.3" stroke-linecap="square"/></svg></div>
<div style="position:absolute;left:1185px;top:267px;line-height:16px;font-size:12px;color:#0a3cc8;white-space:nowrap;">初始化</div>
<div style="position:absolute;left:1263px;top:267px;line-height:16px;font-size:12px;color:#0a3cc8;white-space:nowrap;">打开</div>
<div style="position:absolute;left:1322px;top:267px;line-height:16px;font-size:12px;color:#0a3cc8;white-space:nowrap;">新窗打开</div>
<div style="position:absolute;left:1407px;top:267px;line-height:16px;font-size:12px;color:#0a3cc8;white-space:nowrap;">保存</div>
<div style="position:absolute;left:1473px;top:267px;line-height:16px;font-size:12px;color:#0a3cc8;white-space:nowrap;">另存为</div>
<div style="position:absolute;left:1538px;top:267px;line-height:16px;font-size:12px;color:#0a3cc8;white-space:nowrap;">界面设计</div>
<div style="position:absolute;left:1624px;top:267px;line-height:16px;font-size:12px;color:#0a3cc8;white-space:nowrap;">搜索</div>
<div style="position:absolute;left:1695px;top:267px;line-height:16px;font-size:12px;color:#0a3cc8;white-space:nowrap;">字体</div>
<div style="position:absolute;left:1755px;top:267px;line-height:16px;font-size:12px;color:#0a3cc8;white-space:nowrap;">隐藏控件</div>
<div style="position:absolute;left:1850px;top:267px;line-height:16px;font-size:12px;color:#0a3cc8;white-space:nowrap;">工具</div>
<div style="position:absolute;left:1985px;top:267px;line-height:16px;font-size:12px;color:#0a3cc8;white-space:nowrap;">返回</div>
<svg width="11" height="13" viewBox="0 0 11 13" style="position:absolute;left:1832px;top:268px"><path d="M0.2 6.2L5 11.9" fill="none" stroke="#555" stroke-width="1.3"/><path d="M2.9 1h4.5v5h2.4L5 11.7 0.2 6h2.7z" fill="#0a10f4"/></svg>
<div style="position:absolute;left:1165px;top:316px;width:606px;height:1px;background:#dcdcdc"></div>
<div style="position:absolute;left:1165px;top:296px;width:62px;height:22px;background:#fafafa;border:1px solid #dadada;border-bottom:none"></div>
<div style="position:absolute;left:1227px;top:299px;width:59px;height:18px;border:1px solid #dadada;border-bottom:none"></div>
<div style="position:absolute;left:1286px;top:299px;width:59px;height:18px;border:1px solid #dadada;border-bottom:none;border-left:none"></div>
<div style="position:absolute;left:1171px;top:298px;line-height:16px;font-size:12px;color:#000;white-space:nowrap;">脚本程序</div>
<div style="position:absolute;left:1231px;top:300px;line-height:16px;font-size:12px;color:#000;white-space:nowrap;">说明帮助</div>
<div style="position:absolute;left:1291px;top:300px;line-height:16px;font-size:12px;color:#000;white-space:nowrap;">脚本说明</div>
<div style="position:absolute;left:1165px;top:318px;width:592px;height:546px;background:#fff"></div>
<div style="position:absolute;left:1757px;top:318px;width:14px;height:545px;background:#f0f0f0;border-left:1px solid #e6e6e6"></div>
<div style="position:absolute;left:1763px;top:335px;width:2px;height:140px;background:#8a8a8a"></div>
<div style="position:absolute;left:1165px;top:864px;width:606px;height:18px;background:#f0f0f0;border-top:1px solid #e6e6e6"></div>
<div style="position:absolute;left:1185px;top:871px;width:366px;height:2px;background:#8a8a8a"></div>
<div class="abs" style="left:1165px;top:318px;width:592px;height:546px;overflow:hidden">
<div class="code" style="left:4px;top:2px">int init_test()</div>
<div class="code" style="left:4px;top:21px">{</div>
<div class="code" style="left:4px;top:40px">  return 1;</div>
<div class="code" style="left:4px;top:59px">};</div>
<div class="code" style="left:4px;top:97px">int create_voucher()</div>
<div class="code" style="left:4px;top:116px">{</div>
<div class="code" style="left:4px;top:135px">  return 1;</div>
<div class="code" style="left:4px;top:154px">};</div>
<div class="code" style="left:4px;top:192px">// <b>打开面单明细</b></div>
<div class="code" style="left:4px;top:211px">int open_rep_001()</div>
<div class="code" style="left:4px;top:230px">{</div>
<div class="code" style="left:4px;top:249px">  string eba_id, beg_date;</div>
<div class="code" style="left:4px;top:268px">  eba_id = gui_get_val("ComboBox_Ext_Eba_Id");</div>
<div class="code" style="left:4px;top:306px">  dbg('eba_id: ' + eba_id);</div>
<div class="code" style="left:4px;top:344px">  rep_para_prepare('lmt_eba_id', eba_id);</div>
<div class="code" style="left:4px;top:382px">  call_str('view_csp_rep.ds_001');</div>
<div class="code" style="left:4px;top:401px">  return 1;</div>
<div class="code" style="left:4px;top:420px">};</div>
<div class="code" style="left:4px;top:458px">int func_show()</div>
<div class="code" style="left:4px;top:477px">{</div>
<div class="code" style="left:4px;top:496px">  gui_create_button("Panel_Func", 't1', 800, 6, 100, 22, '<b>面单明细</b>', 'call</div>
<div class="code" style="left:4px;top:534px">  return 1;</div>
</div>
<div style="position:absolute;left:1165px;top:884px;width:983px;height:1px;background:#e2e2e2"></div>
<div style="position:absolute;left:1213px;top:887px;width:1px;height:20px;background:#dcdcdc"></div>
<div style="position:absolute;left:1263px;top:887px;width:1px;height:20px;background:#dcdcdc"></div>
<div style="position:absolute;left:1313px;top:887px;width:1px;height:20px;background:#dcdcdc"></div>
<div style="position:absolute;left:1363px;top:887px;width:1px;height:20px;background:#dcdcdc"></div>
<div style="position:absolute;left:1177px;top:889px;line-height:16px;font-size:12px;color:#000;white-space:nowrap;font-family:'Liberation Sans','Noto Sans CJK SC',sans-serif;">行号</div>
<div style="position:absolute;left:862px;width:400px;text-align:right;top:889px;line-height:16px;font-size:12px;color:#000;white-space:nowrap;font-family:'Liberation Sans','Noto Sans CJK SC',sans-serif;font-size:12.5px;">104</div>
<div style="position:absolute;left:1278px;top:889px;line-height:16px;font-size:12px;color:#000;white-space:nowrap;font-family:'Liberation Sans','Noto Sans CJK SC',sans-serif;">列号</div>
<div style="position:absolute;left:961px;width:400px;text-align:right;top:889px;line-height:16px;font-size:12px;color:#000;white-space:nowrap;font-family:'Liberation Sans','Noto Sans CJK SC',sans-serif;font-size:12.5px;">1</div>
<svg class="abs" style="left:2137px;top:896px" width="10" height="10"><path d="M7 1h2v2h-2zM4 4h2v2h-2zM7 4h2v2h-2zM1 7h2v2h-2zM4 7h2v2h-2zM7 7h2v2h-2z" fill="#b8b8b8"/></svg>
<div style="position:absolute;left:1776px;top:296px;width:3px;height:588px;background:#a9c8f0"></div>
<div style="position:absolute;left:1787px;top:300px;line-height:16px;font-size:12px;color:#1020b0;white-space:nowrap;">类型</div>
<div style="position:absolute;left:1843px;top:298px;width:106px;height:20px;background:#fff;border-bottom:1px solid #c8c8c8"></div>
<div style="position:absolute;left:1847px;top:301px;line-height:16px;font-size:12px;color:#000;white-space:nowrap;">全部</div>
<div style="position:absolute;left:1949px;top:298px;width:16px;height:20px;background:#f4f4f4;border:1px solid #8a8a8a"><svg width="14" height="18"><path d="M3 7h8l-4 4.5z" fill="#111"/></svg></div>
<div class="cb" style="left:1976px;top:302px"></div>
<div style="position:absolute;left:1991px;top:302px;line-height:16px;font-size:12px;color:#000;white-space:nowrap;">隐藏不可见项目</div>
<div style="position:absolute;left:1786px;top:326.5px;line-height:16px;font-size:12px;color:#000080;white-space:nowrap;">鼠标所在</div>
<div class="inp" style="left:1844px;top:327px;width:115px;height:20px;line-height:20px;font-size:11px">EW</div>
<div class="inp" style="left:1965px;top:327px;width:119px;height:20px;line-height:20px;font-size:11px">EW</div>
<div style="position:absolute;left:2088px;top:324px;width:52px;height:23px;background:#f6f6f6;border:1px solid #d8d8d8;border-radius:4px;text-align:center;line-height:20px">定位<span style="font-size:11px">G</span></div>
<div style="position:absolute;left:1786px;top:353px;line-height:16px;font-size:12px;color:#000;white-space:nowrap;">控件坐标</div>
<div class="inp" style="left:1844px;top:351px;width:33px;height:19px;line-height:18px;font-family:'Liberation Sans','Noto Sans CJK SC',sans-serif;font-size:11.5px">110</div>
<div class="inp" style="left:1885px;top:351px;width:33px;height:19px;line-height:18px;font-family:'Liberation Sans','Noto Sans CJK SC',sans-serif;font-size:11.5px">3</div>
<div class="inp" style="left:1924px;top:351px;width:33px;height:19px;line-height:18px;font-family:'Liberation Sans','Noto Sans CJK SC',sans-serif;font-size:11.5px">190</div>
<div class="inp" style="left:1965px;top:351px;width:33px;height:19px;line-height:18px;font-family:'Liberation Sans','Noto Sans CJK SC',sans-serif;font-size:11.5px">20</div>
<div class="inp" style="left:2061px;top:351px;width:33px;height:19px;line-height:18px;font-family:'Liberation Sans','Noto Sans CJK SC',sans-serif;font-size:11.5px">253</div>
<div class="inp" style="left:2102px;top:351px;width:33px;height:19px;line-height:18px;font-family:'Liberation Sans','Noto Sans CJK SC',sans-serif;font-size:11.5px">307</div>
<div style="position:absolute;left:2003px;top:352.5px;line-height:16px;font-size:12px;color:#000;white-space:nowrap;">鼠标坐标</div>
<div style="position:absolute;left:2131px;top:377px;width:1px;height:507px;background:#fafafa"></div>
<div style="position:absolute;left:2139px;top:437px;width:2px;height:206px;background:#8a8a8a"></div>
<div style="position:absolute;left:1779px;top:883px;width:369px;height:1px;background:#dedede"></div>
<div style="position:absolute;left:1790px;top:377px;width:1px;height:506px;background-image:linear-gradient(#8a8a8a 50%,transparent 50%);background-size:1px 2px"></div>
<div style="position:absolute;left:1809px;top:377px;width:1px;height:506px;background-image:linear-gradient(#8a8a8a 50%,transparent 50%);background-size:1px 2px"></div>
<div style="position:absolute;left:1828px;top:377px;width:1px;height:418px;background-image:linear-gradient(#8a8a8a 50%,transparent 50%);background-size:1px 2px"></div>
<div style="position:absolute;left:1847px;top:814px;width:1px;height:58px;background-image:linear-gradient(#8a8a8a 50%,transparent 50%);background-size:1px 2px"></div>
<div style="position:absolute;left:1829px;top:388px;width:9px;height:1px;background-image:linear-gradient(90deg,#8a8a8a 50%,transparent 50%);background-size:2px 1px"></div>
<div style="position:absolute;left:1842px;top:379px;line-height:18px;font-size:14px;color:#000;white-space:nowrap;font-family:'Liberation Sans','Noto Sans CJK SC',sans-serif;font-weight:bold;">A</div>
<div class="tree" style="position:absolute;left:1860px;top:379px;line-height:18px;font-size:13.3px;color:#1a1a1a;white-space:nowrap;letter-spacing:-0.44px;">Label_U3 Label_U3 TLabel</div>
<div style="position:absolute;left:1829px;top:410px;width:9px;height:1px;background-image:linear-gradient(90deg,#8a8a8a 50%,transparent 50%);background-size:2px 1px"></div>
<div style="position:absolute;left:1842px;top:401px;line-height:18px;font-size:14px;color:#000;white-space:nowrap;font-family:'Liberation Sans','Noto Sans CJK SC',sans-serif;font-weight:bold;">A</div>
<div class="tree" style="position:absolute;left:1860px;top:401px;line-height:18px;font-size:13.3px;color:#1a1a1a;white-space:nowrap;letter-spacing:-0.44px;">Label_U4 Label_U4 TLabel</div>
<div style="position:absolute;left:1829px;top:432px;width:9px;height:1px;background-image:linear-gradient(90deg,#8a8a8a 50%,transparent 50%);background-size:2px 1px"></div>
<div style="position:absolute;left:1842px;top:423px;line-height:18px;font-size:14px;color:#000;white-space:nowrap;font-family:'Liberation Sans','Noto Sans CJK SC',sans-serif;font-weight:bold;">A</div>
<div class="tree" style="position:absolute;left:1860px;top:423px;line-height:18px;font-size:13.3px;color:#1a1a1a;white-space:nowrap;letter-spacing:-0.44px;">Label_U5 Label_U5 TLabel</div>
<div style="position:absolute;left:1829px;top:454px;width:9px;height:1px;background-image:linear-gradient(90deg,#8a8a8a 50%,transparent 50%);background-size:2px 1px"></div>
<div style="position:absolute;left:1842px;top:445px;line-height:18px;font-size:14px;color:#000;white-space:nowrap;font-family:'Liberation Sans','Noto Sans CJK SC',sans-serif;font-weight:bold;">A</div>
<div class="tree" style="position:absolute;left:1860px;top:445px;line-height:18px;font-size:13.3px;color:#1a1a1a;white-space:nowrap;letter-spacing:-0.44px;">Label_U6 Label_U6 TLabel</div>
<div style="position:absolute;left:1829px;top:476px;width:9px;height:1px;background-image:linear-gradient(90deg,#8a8a8a 50%,transparent 50%);background-size:2px 1px"></div>
<div style="position:absolute;left:1842px;top:467px;line-height:18px;font-size:14px;color:#000;white-space:nowrap;font-family:'Liberation Sans','Noto Sans CJK SC',sans-serif;font-weight:bold;">A</div>
<div class="tree" style="position:absolute;left:1860px;top:467px;line-height:18px;font-size:13.3px;color:#1a1a1a;white-space:nowrap;letter-spacing:-0.44px;">Label_U7 Label_U7 TLabel</div>
<div style="position:absolute;left:1829px;top:498px;width:9px;height:1px;background-image:linear-gradient(90deg,#8a8a8a 50%,transparent 50%);background-size:2px 1px"></div>
<div style="position:absolute;left:1842px;top:489px;line-height:18px;font-size:14px;color:#000;white-space:nowrap;font-family:'Liberation Sans','Noto Sans CJK SC',sans-serif;font-weight:bold;">A</div>
<div class="tree" style="position:absolute;left:1860px;top:489px;line-height:18px;font-size:13.3px;color:#1a1a1a;white-space:nowrap;letter-spacing:-0.44px;">Label_V6 Label_V6 TLabel</div>
<div style="position:absolute;left:1829px;top:520px;width:9px;height:1px;background-image:linear-gradient(90deg,#8a8a8a 50%,transparent 50%);background-size:2px 1px"></div>
<div style="position:absolute;left:1842px;top:511px;line-height:18px;font-size:14px;color:#000;white-space:nowrap;font-family:'Liberation Sans','Noto Sans CJK SC',sans-serif;font-weight:bold;">A</div>
<div class="tree" style="position:absolute;left:1860px;top:511px;line-height:18px;font-size:13.3px;color:#1a1a1a;white-space:nowrap;letter-spacing:-0.44px;">Label_V1 Label_V1 TLabel</div>
<div style="position:absolute;left:1829px;top:542px;width:9px;height:1px;background-image:linear-gradient(90deg,#8a8a8a 50%,transparent 50%);background-size:2px 1px"></div>
<div style="position:absolute;left:1842px;top:533px;line-height:18px;font-size:14px;color:#000;white-space:nowrap;font-family:'Liberation Sans','Noto Sans CJK SC',sans-serif;font-weight:bold;">A</div>
<div class="tree" style="position:absolute;left:1860px;top:533px;line-height:18px;font-size:13.3px;color:#1a1a1a;white-space:nowrap;letter-spacing:-0.44px;">Label_V2 Label_V2 TLabel</div>
<div style="position:absolute;left:1829px;top:564px;width:9px;height:1px;background-image:linear-gradient(90deg,#8a8a8a 50%,transparent 50%);background-size:2px 1px"></div>
<div style="position:absolute;left:1842px;top:555px;line-height:18px;font-size:14px;color:#000;white-space:nowrap;font-family:'Liberation Sans','Noto Sans CJK SC',sans-serif;font-weight:bold;">A</div>
<div class="tree" style="position:absolute;left:1860px;top:555px;line-height:18px;font-size:13.3px;color:#1a1a1a;white-space:nowrap;letter-spacing:-0.44px;">Label_V3 Label_V3 TLabel</div>
<div style="position:absolute;left:1829px;top:586px;width:9px;height:1px;background-image:linear-gradient(90deg,#8a8a8a 50%,transparent 50%);background-size:2px 1px"></div>
<div style="position:absolute;left:1842px;top:577px;line-height:18px;font-size:14px;color:#000;white-space:nowrap;font-family:'Liberation Sans','Noto Sans CJK SC',sans-serif;font-weight:bold;">A</div>
<div class="tree" style="position:absolute;left:1860px;top:577px;line-height:18px;font-size:13.3px;color:#1a1a1a;white-space:nowrap;letter-spacing:-0.44px;">Label_V4 Label_V4 TLabel</div>
<div style="position:absolute;left:1829px;top:608px;width:9px;height:1px;background-image:linear-gradient(90deg,#8a8a8a 50%,transparent 50%);background-size:2px 1px"></div>
<div style="position:absolute;left:1842px;top:599px;line-height:18px;font-size:14px;color:#000;white-space:nowrap;font-family:'Liberation Sans','Noto Sans CJK SC',sans-serif;font-weight:bold;">A</div>
<div class="tree" style="position:absolute;left:1860px;top:599px;line-height:18px;font-size:13.3px;color:#1a1a1a;white-space:nowrap;letter-spacing:-0.44px;">Label_V5 Label_V5 TLabel</div>
<div style="position:absolute;left:1829px;top:630px;width:9px;height:1px;background-image:linear-gradient(90deg,#8a8a8a 50%,transparent 50%);background-size:2px 1px"></div>
<div style="position:absolute;left:1842px;top:621px;line-height:18px;font-size:14px;color:#000;white-space:nowrap;font-family:'Liberation Sans','Noto Sans CJK SC',sans-serif;font-weight:bold;">A</div>
<div class="tree" style="position:absolute;left:1860px;top:621px;line-height:18px;font-size:13.3px;color:#1a1a1a;white-space:nowrap;letter-spacing:-0.44px;">Label_V7 Label_V17 TLabel</div>
<div style="position:absolute;left:1829px;top:652px;width:9px;height:1px;background-image:linear-gradient(90deg,#8a8a8a 50%,transparent 50%);background-size:2px 1px"></div>
<div style="position:absolute;left:1842px;top:643px;line-height:18px;font-size:14px;color:#000;white-space:nowrap;font-family:'Liberation Sans','Noto Sans CJK SC',sans-serif;font-weight:bold;">A</div>
<div class="tree" style="position:absolute;left:1860px;top:643px;line-height:18px;font-size:13.3px;color:#1a1a1a;white-space:nowrap;letter-spacing:-0.44px;">Label_V8 Label_V8 TLabel</div>
<div style="position:absolute;left:1829px;top:674px;width:9px;height:1px;background-image:linear-gradient(90deg,#8a8a8a 50%,transparent 50%);background-size:2px 1px"></div>
<div style="position:absolute;left:1842px;top:665px;line-height:18px;font-size:14px;color:#000;white-space:nowrap;font-family:'Liberation Sans','Noto Sans CJK SC',sans-serif;font-weight:bold;">A</div>
<div class="tree" style="position:absolute;left:1860px;top:665px;line-height:18px;font-size:13.3px;color:#1a1a1a;white-space:nowrap;letter-spacing:-0.44px;">Label_U8 Label_U8 TLabel</div>
<svg class="abs" style="left:1824px;top:689px" width="8" height="12"><path d="M1.5 1.5l4.5 4.5-4.5 4.5" fill="none" stroke="#8a8a8a" stroke-width="1.4"/></svg>
<div style="position:absolute;left:1834px;top:696px;width:5px;height:1px;background-image:linear-gradient(90deg,#8a8a8a 50%,transparent 50%);background-size:2px 1px"></div>
<div style="position:absolute;left:1840px;top:688px;width:13px;height:14px;border:1px solid #111;background:#f6f6f6"></div>
<div class="tree" style="position:absolute;left:1860px;top:687px;line-height:18px;font-size:13.3px;color:#1a1a1a;white-space:nowrap;">ScrollBox_Voucher_Sub_Type&nbsp; TScrollBox</div>
<svg class="abs" style="left:1824px;top:711px" width="8" height="12"><path d="M1.5 1.5l4.5 4.5-4.5 4.5" fill="none" stroke="#8a8a8a" stroke-width="1.4"/></svg>
<div style="position:absolute;left:1834px;top:718px;width:5px;height:1px;background-image:linear-gradient(90deg,#8a8a8a 50%,transparent 50%);background-size:2px 1px"></div>
<div style="position:absolute;left:1840px;top:710px;width:13px;height:14px;border:1px solid #111;background:#f6f6f6"></div>
<div class="tree" style="position:absolute;left:1860px;top:709px;line-height:18px;font-size:13.3px;color:#1a1a1a;white-space:nowrap;letter-spacing:-0.18px;">ScrollBox_Voucher_Name&nbsp; TScrollBox</div>
<svg class="abs" style="left:1824px;top:733px" width="8" height="12"><path d="M1.5 1.5l4.5 4.5-4.5 4.5" fill="none" stroke="#8a8a8a" stroke-width="1.4"/></svg>
<div style="position:absolute;left:1834px;top:740px;width:5px;height:1px;background-image:linear-gradient(90deg,#8a8a8a 50%,transparent 50%);background-size:2px 1px"></div>
<div style="position:absolute;left:1840px;top:732px;width:13px;height:14px;border:1px solid #111;background:#f6f6f6"></div>
<div class="tree" style="position:absolute;left:1860px;top:731px;line-height:18px;font-size:13.3px;color:#1a1a1a;white-space:nowrap;letter-spacing:-0.18px;">ScrollBox_Voucher_Date&nbsp; TScrollBox</div>
<svg class="abs" style="left:1824px;top:755px" width="8" height="12"><path d="M1.5 1.5l4.5 4.5-4.5 4.5" fill="none" stroke="#8a8a8a" stroke-width="1.4"/></svg>
<div style="position:absolute;left:1834px;top:762px;width:5px;height:1px;background-image:linear-gradient(90deg,#8a8a8a 50%,transparent 50%);background-size:2px 1px"></div>
<div style="position:absolute;left:1840px;top:754px;width:13px;height:14px;border:1px solid #111;background:#f6f6f6"></div>
<div class="tree" style="position:absolute;left:1860px;top:753px;line-height:18px;font-size:13.3px;color:#1a1a1a;white-space:nowrap;letter-spacing:-0.18px;">ScrollBox_Voucher_No&nbsp; TScrollBox</div>
<svg class="abs" style="left:1824px;top:777px" width="8" height="12"><path d="M1.5 1.5l4.5 4.5-4.5 4.5" fill="none" stroke="#8a8a8a" stroke-width="1.4"/></svg>
<div style="position:absolute;left:1834px;top:784px;width:5px;height:1px;background-image:linear-gradient(90deg,#8a8a8a 50%,transparent 50%);background-size:2px 1px"></div>
<div style="position:absolute;left:1840px;top:776px;width:13px;height:14px;border:1px solid #111;background:#f6f6f6"></div>
<div class="tree" style="position:absolute;left:1860px;top:775px;line-height:18px;font-size:13.3px;color:#1a1a1a;white-space:nowrap;">ScrollBox_Mio_Subject_Id&nbsp; TScrollBox</div>
<svg class="abs" style="left:1822px;top:801px" width="12" height="8"><path d="M1.5 1.5l4.5 4.5 4.5-4.5" fill="none" stroke="#222" stroke-width="1.5"/></svg>
<div style="position:absolute;left:1834px;top:806px;width:5px;height:1px;background-image:linear-gradient(90deg,#8a8a8a 50%,transparent 50%);background-size:2px 1px"></div>
<div style="position:absolute;left:1840px;top:798px;width:13px;height:14px;border:1px solid #111;background:#f6f6f6"></div>
<div class="tree" style="position:absolute;left:1860px;top:797px;line-height:18px;font-size:13.3px;color:#1a1a1a;white-space:nowrap;">ScrollBox_Eba&nbsp; TScrollBox</div>
<div style="position:absolute;left:1856px;top:860px;width:267px;height:22px;background:#cdcdcd;border-radius:2px"></div>
<div style="position:absolute;left:1848px;top:828px;width:10px;height:1px;background-image:linear-gradient(90deg,#8a8a8a 50%,transparent 50%);background-size:2px 1px"></div>
<div style="position:absolute;left:1848px;top:850px;width:10px;height:1px;background-image:linear-gradient(90deg,#8a8a8a 50%,transparent 50%);background-size:2px 1px"></div>
<div style="position:absolute;left:1848px;top:872px;width:10px;height:1px;background-image:linear-gradient(90deg,#8a8a8a 50%,transparent 50%);background-size:2px 1px"></div>
<div style="position:absolute;left:1860px;top:819px;line-height:18px;font-size:14px;color:#000;white-space:nowrap;font-family:'Liberation Sans','Noto Sans CJK SC',sans-serif;font-weight:bold;">A</div>
<div class="tree" style="position:absolute;left:1879px;top:819px;line-height:18px;font-size:13.3px;color:#1a1a1a;white-space:nowrap;letter-spacing:-0.4px;">Label_Eba_Id <u style="font-size:12px">企业</u> TLabel</div>
<svg class="abs" style="left:1857px;top:841px" width="18" height="12"><path d="M1 .5h15.5v9" fill="none" stroke="#111" stroke-width="1"/><path d="M1 10.5h15.5" stroke="#111" stroke-width="1.6"/><text x="4" y="8.5" font-size="8" font-weight="bold" font-family="Liberation Sans,sans-serif" fill="#111">OK</text></svg>
<div class="tree" style="position:absolute;left:1879px;top:841px;line-height:18px;font-size:13.3px;color:#1a1a1a;white-space:nowrap;">SpeedButton_Eba_Select .. TSpeedButton</div>
<svg class="abs" style="left:1858px;top:863px" width="16" height="16"><rect x=".5" y=".5" width="13" height="4" fill="#ddd" stroke="#555"/><path d="M11 1v3M11 1h2M11 2.5h1.5" stroke="#111" stroke-width=".8"/><path d="M2 5v10h12" fill="none" stroke="#111" stroke-width="1.4"/><rect x="3" y="6" width="12" height="3" fill="#10108a"/><rect x="3" y="10.5" width="12" height="3" fill="#10108a"/></svg>
<div class="tree" style="position:absolute;left:1879px;top:863px;line-height:18px;font-size:13.3px;color:#1a1a1a;white-space:nowrap;">ComboBox_Ext_Eba_Id&nbsp; TComboBox_Ext</div>
<div style="position:absolute;left:1371px;top:914px;width:7px;height:15px;background:#d7e4f2"></div>
<div style="position:absolute;left:1377px;top:914px;width:1px;height:15px;background:#444"></div>
<div style="position:absolute;left:1378px;top:914px;width:800px;height:8px;background:#f0f0f0"></div>
<div style="position:absolute;left:1378px;top:922px;width:800px;height:7px;background:#dce6f1"></div>
<svg class="abs" style="left:0;top:0" width="2165" height="929" viewBox="0 0 2165 929"><path d="M1436 51L1441 51.5Q1446 55 1448 59.5L1453 62.5Q1456.5 67 1455.5 74L1452.5 76L1450.5 80L1446 80.8Q1439 77.5 1434 72Q1431.5 67 1433 62L1435.5 57.5Q1434.5 53 1436 51Z" fill="#fa3737"/><path d="M1438.8 55l2.8 2.6l-2.6 0.3z" fill="#fff" opacity=".85"/><path d="M164 330.5Q150 330.5 136 332Q130 333.5 132 337Q133 340.5 136 342.5Q147 346.5 164 344.5Q174 342 181 337" fill="none" stroke="#fa3737" stroke-width="3" stroke-linecap="round"/><path d="M163.8 326Q170 323.5 177.3 323L182 323.6Q185 326 184.8 329.5Q184.5 333.5 180 338Q176 341.5 168 342.6L157 342.5Q159 338 161.5 335.5L164.4 330.5Z" fill="#fa3737"/><circle cx="166.5" cy="337" r="1.2" fill="#fff" opacity=".8"/><circle cx="172" cy="334" r=".8" fill="#fff" opacity=".7"/><path d="M176 329.5q1.5-.8 2.5.5" stroke="#fff" stroke-width=".8" fill="none" opacity=".7"/></svg>
<div style="position:absolute;left:809px;top:248.2px;width:127px;height:39.8px;border:3.3px solid #f23535"></div>
<div style="position:absolute;left:1102.4px;top:498.8px;width:475px;height:264.2px;border:3.4px solid #f23535"></div>
<div class="abs" style="left:965px;top:225px;width:501px;height:232px;background:rgba(0,0,0,.6);border-radius:4px"></div>
<svg class="abs" style="left:957px;top:236px" width="8" height="14"><path d="M8 0v14L1 7z" fill="rgba(0,0,0,.6)"/></svg>
<div style="position:absolute;left:935.5px;top:232.5px;width:20px;height:20px;background:#f23c3c;border-radius:10px;color:#fff;text-align:center;line-height:20px;font-size:13px;font-family:'Liberation Sans','Noto Sans CJK SC',sans-serif">1</div>
<div class="ov" style="position:absolute;left:971px;top:232px;line-height:22px;font-size:16px;color:#fff;white-space:nowrap;">在应收款单中</div>
<div class="ov" style="position:absolute;left:971px;top:254px;line-height:22px;font-size:16px;color:#fff;white-space:nowrap;">点击面单明细</div>
<div class="ov" style="position:absolute;left:971px;top:298px;line-height:22px;font-size:16px;color:#fff;white-space:nowrap;">调出自定义报表 ds_001</div>
<div class="ov" style="position:absolute;left:971px;top:342px;line-height:22px;font-size:16px;color:#fff;white-space:nowrap;">希望 在调出之前，能使用 rep_para_prepare 设置 ds_001 的参数值</div>
<div class="ov" style="position:absolute;left:971px;top:387px;line-height:22px;font-size:16px;color:#fff;white-space:nowrap;">目前 测试不能。</div>
</body></html>
